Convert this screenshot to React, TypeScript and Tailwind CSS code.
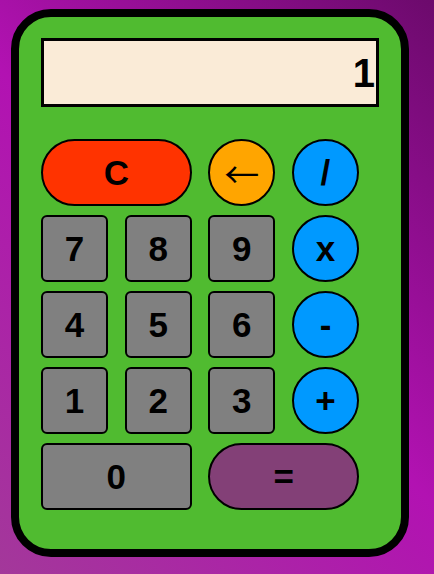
const keys: { label: string; kind: 'num' | 'op' | 'clear' | 'back' | 'eq'; wide?: boolean }[] = [
  { label: 'C', kind: 'clear', wide: true },
  { label: '←', kind: 'back' },
  { label: '/', kind: 'op' },
  { label: '7', kind: 'num' },
  { label: '8', kind: 'num' },
  { label: '9', kind: 'num' },
  { label: 'x', kind: 'op' },
  { label: '4', kind: 'num' },
  { label: '5', kind: 'num' },
  { label: '6', kind: 'num' },
  { label: '-', kind: 'op' },
  { label: '1', kind: 'num' },
  { label: '2', kind: 'num' },
  { label: '3', kind: 'num' },
  { label: '+', kind: 'op' },
  { label: '0', kind: 'num', wide: true },
  { label: '=', kind: 'eq', wide: true },
]

const kindClass = {
  num: 'bg-[#808080] rounded-[6px] font-bold text-[35px]',
  op: 'bg-[#0099ff] rounded-full font-bold text-[35px]',
  clear: 'bg-[#ff3300] rounded-full font-bold text-[35px]',
  back: 'bg-[#ffa500] rounded-full font-normal text-[35px] font-[family-name:Noto_Sans_CJK_SC,sans-serif]',
  eq: 'bg-[#834077] rounded-full font-bold text-[35px]',
}

export default function App() {
  return (
    <div className="w-[434px] h-[574px] pl-[11px] pt-[9px] font-[family-name:Liberation_Sans,Arial,sans-serif] bg-[linear-gradient(45deg,#a3389a_0%,#b212b2_50%,#6c0a6c_100%)]">
      <div className="w-[398px] h-[548px] border-8 border-black rounded-[40px] bg-[#50bb30] pl-[22px] pt-[21px]">
        <div className="w-[338px] h-[69px] border-[3px] border-black bg-[#faebd7] flex items-center justify-end pr-[1px] text-[40px] font-bold text-black leading-none">
          1
        </div>
        <div className="mt-[32px] grid grid-cols-[repeat(4,67px)] auto-rows-[67px] gap-x-[16.67px] gap-y-[9px]">
          {keys.map(k => (
            <button
              key={k.label}
              className={`${k.wide ? 'col-span-2' : ''} ${kindClass[k.kind]} border-2 border-black flex items-center justify-center text-black leading-none`}
            >
              {k.label}
            </button>
          ))}
        </div>
      </div>
    </div>
  )
}
